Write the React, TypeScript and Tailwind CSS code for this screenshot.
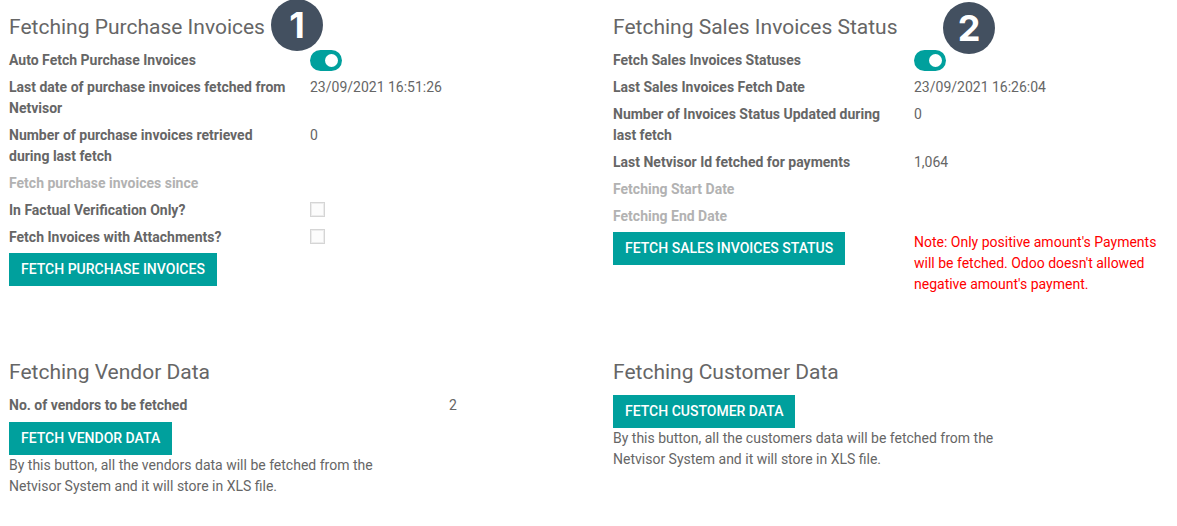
import { ReactNode } from "react";

const Badge = ({ value, className }: { value: number; className: string }) => (
  <span
    className={`absolute flex size-[52px] items-center justify-center rounded-full bg-[#435060] font-[Inter,sans-serif] text-4xl font-bold text-white ${className}`}
  >
    {value}
  </span>
);

const Title = ({ children }: { children: ReactNode }) => (
  <h2 className="mb-[6px] text-[21px] leading-[33px]">{children}</h2>
);

const Row = ({
  label,
  id,
  muted,
  children,
}: {
  label: string;
  id?: string;
  muted?: boolean;
  children?: ReactNode;
}) => (
  <div className="grid grid-cols-[301px_1fr]">
    <label htmlFor={id} className={`pr-4 font-bold ${muted ? "text-[#b2b2b2]" : ""}`}>
      {label}
    </label>
    <div>{children}</div>
  </div>
);

const Toggle = ({ id }: { id: string }) => (
  <input
    id={id}
    type="checkbox"
    role="switch"
    defaultChecked
    className="block h-[21px] w-8 appearance-none rounded-full bg-gray-300 before:mt-1 before:ml-1 before:block before:size-[13px] before:rounded-full before:bg-white checked:bg-[#00a09d] checked:before:ml-[15px]"
  />
);

const Checkbox = ({ id }: { id: string }) => (
  <input
    id={id}
    type="checkbox"
    className="mt-[2px] block size-[15px] appearance-none border border-[#d5d5d5] bg-[#fcfcfc] shadow-[inset_0_0_0_1px_#ececec] checked:bg-[#00a09d]"
  />
);

const Button = ({ children }: { children: ReactNode }) => (
  <button type="button" className="bg-[#00a09d] px-3 py-[6px] font-medium text-white uppercase">
    {children}
  </button>
);

const App = () => {
  return (
    <main className="grid grid-cols-2 gap-x-12 gap-y-[61px] bg-white pt-[11px] pr-2 pb-7 pl-[9px] font-[Roboto,sans-serif] text-sm leading-[21px] text-[#666]">
      <section className="relative">
        <Title>Fetching Purchase Invoices</Title>
        <Badge value={1} className="-top-3 left-[262px]" />
        <div className="mb-[5px] flex flex-col gap-[6px]">
          <Row label="Auto Fetch Purchase Invoices" id="auto-fetch">
            <Toggle id="auto-fetch" />
          </Row>
          <Row label="Last date of purchase invoices fetched from Netvisor">23/09/2021 16:51:26</Row>
          <Row label="Number of purchase invoices retrieved during last fetch">0</Row>
          <Row label="Fetch purchase invoices since" muted />
          <Row label="In Factual Verification Only?" id="factual">
            <Checkbox id="factual" />
          </Row>
          <Row label="Fetch Invoices with Attachments?" id="attachments">
            <Checkbox id="attachments" />
          </Row>
        </div>
        <Button>Fetch Purchase Invoices</Button>
      </section>

      <section className="relative">
        <Title>Fetching Sales Invoices Status</Title>
        <Badge value={2} className="-top-[9px] left-[330px]" />
        <div className="mb-[5px] flex flex-col gap-[6px]">
          <Row label="Fetch Sales Invoices Statuses" id="sales-status">
            <Toggle id="sales-status" />
          </Row>
          <Row label="Last Sales Invoices Fetch Date">23/09/2021 16:26:04</Row>
          <Row label="Number of Invoices Status Updated during last fetch">0</Row>
          <Row label="Last Netvisor Id fetched for payments">1,064</Row>
          <Row label="Fetching Start Date" muted />
          <Row label="Fetching End Date" muted />
        </div>
        <div className="grid grid-cols-[301px_1fr] items-start">
          <div>
            <Button>Fetch Sales Invoices Status</Button>
          </div>
          <p className="text-[#f00]">
            Note: Only positive amount's Payments will be fetched. Odoo doesn't allowed negative
            amount's payment.
          </p>
        </div>
      </section>

      <section>
        <Title>Fetching Vendor Data</Title>
        <div className="mb-[6px] flex">
          <span className="w-[440px] font-bold">No. of vendors to be fetched</span>
          <span>2</span>
        </div>
        <Button>Fetch Vendor Data</Button>
        <p className="max-w-[400px]">
          By this button, all the vendors data will be fetched from the Netvisor System and it will
          store in XLS file.
        </p>
      </section>

      <section>
        <Title>Fetching Customer Data</Title>
        <Button>Fetch Customer Data</Button>
        <p className="max-w-[400px]">
          By this button, all the customers data will be fetched from the Netvisor System and it
          will store in XLS file.
        </p>
      </section>
    </main>
  );
};

export default App;
